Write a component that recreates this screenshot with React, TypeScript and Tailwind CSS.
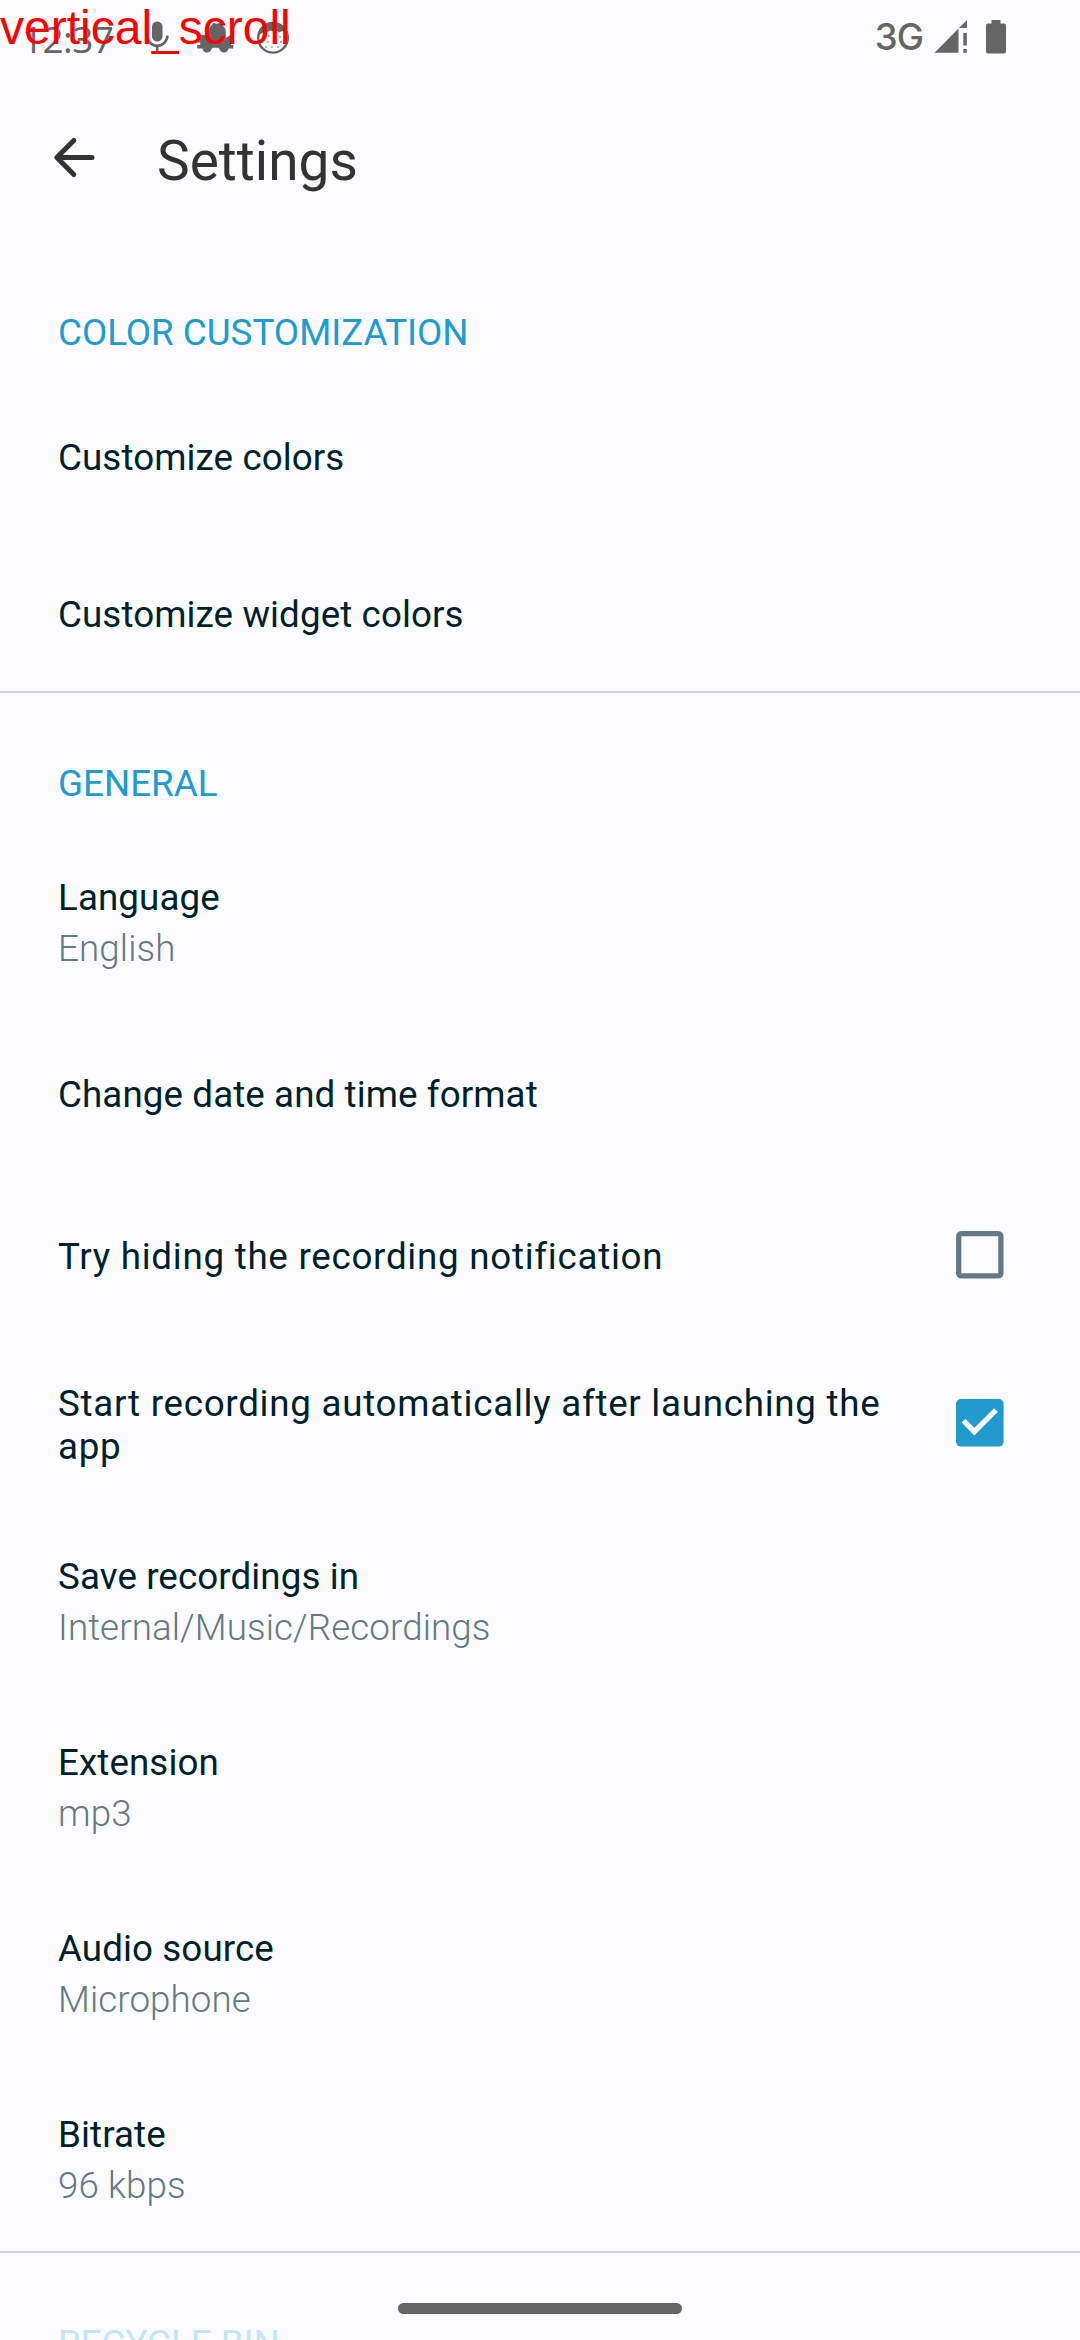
import type { ReactNode } from "react";

const FONT = "font-['Roboto',sans-serif]";

function StatusBar() {
  return (
    <div className="relative flex h-[76px] shrink-0 items-start text-[#656565]">
      <span className="ml-[22px] mt-[17px] w-[103px] font-['Open_Sans',sans-serif] text-[37px] leading-[43px] tracking-[-0.6px]">
        12:37
      </span>
      <svg className="mt-[16px] ml-[12px] h-[44px] w-[40px]" viewBox="137 16 40 44" fill="none">
        <rect x="152" y="21.500" width="10.500" height="20" rx="5.200" fill="currentColor" />
        <path d="M147 35.500a10.200 10.200 0 0 0 20.400 0M157.200 46v8" stroke="currentColor" strokeWidth="2.600" />
      </svg>
      <svg className="mt-[16px] ml-[15px] h-[44px] w-[48px]" viewBox="192 16 48 44" fill="currentColor">
        <path d="M208.800 40v-8q0-4.500 3-7 1.300-2 3-2 2.200 1.500 4.400 0 2.200.5 3.200 2.500 3.400 2 3.400 6.500v8z" />
        <path d="M200.500 35h4l4.500 3h17l4.500-3h3v7.500h-2.500v2.500h2.300v3.500h-4.500l-1.300 2.500q-3.500 3-7 0l-2-3.300h-6l-2 3.300q-3.500 3-7 0l-1.300-2.500h-5V45h3v-2.500h-2.500V40z" />
      </svg>
      <svg className="mt-[16px] ml-[13px] h-[44px] w-[40px]" viewBox="253 16 40 44" fill="none">
        <circle cx="273" cy="37.800" r="14.800" stroke="currentColor" strokeWidth="2.400" />
        <path
          d="M258.500 36q2-2.500 4.500-3.500l2.500-2 2 1.500 3-1.500 3 1 3-1 2.500 2 3.500-1.500 4.500 4q-1-12.500-14.500-12.500t-14 13.500z"
          fill="currentColor"
        />
        <g fill="currentColor">
          <circle cx="264" cy="38" r=".8" />
          <circle cx="269" cy="36" r=".8" />
          <circle cx="274" cy="38" r=".8" />
          <circle cx="280" cy="37" r=".8" />
          <circle cx="262.500" cy="42" r=".8" />
          <circle cx="268" cy="42" r=".8" />
          <circle cx="275" cy="43" r=".8" />
          <circle cx="281" cy="42" r=".8" />
          <circle cx="266" cy="47" r=".8" />
          <circle cx="272" cy="47" r=".8" />
          <circle cx="278" cy="47" r=".8" />
        </g>
      </svg>
      <span className="ml-auto mt-[15px] font-['Inter',sans-serif] text-[36.500px] font-medium leading-[45px] tracking-[-1px]">
        3G
      </span>
      <svg className="ml-[11px] mt-[16px] h-[44px] w-[34px]" viewBox="934 16 34 44" fill="currentColor">
        <path d="M934.500 52.700 958.500 28.500V52.700zM959 28l8-8v8z" />
        <path d="M963.300 33h3.500v12.500h-3.500zM963.300 49h3.500v3.700h-3.500z" />
      </svg>
      <svg className="ml-[17px] mr-[73px] mt-[16px] h-[44px] w-[22px]" viewBox="985 16 22 44" fill="currentColor">
        <path d="M991.500 20h9v3.500h3.500q2 0 2 2v26q0 2-2 2h-16q-2 0-2-2v-26q0-2 2-2h3.500z" />
      </svg>
      <span className="absolute left-0 top-0 font-['Liberation_Sans',sans-serif] text-[48px] leading-[55px] text-[#ff0000]">
        vertical_scroll
      </span>
    </div>
  );
}

function AppBar() {
  return (
    <header className="flex h-[166px] shrink-0 items-start text-[#333333]">
      <svg
        className="ml-[50px] mt-[58px] h-[48px] w-[48px]"
        viewBox="50 134 48 48"
        fill="none"
        stroke="currentColor"
        strokeWidth="5"
        strokeLinecap="round"
        strokeLinejoin="round"
      >
        <path d="M92 157.500H57M73.800 140.500 56.800 157.500 73.800 174.500" />
      </svg>
      <h1 className="ml-[59px] mt-[53px] text-[55px] leading-[64px]">Settings</h1>
    </header>
  );
}

function Section({ title, last, children }: { title: string; last?: boolean; children?: ReactNode }) {
  return (
    <section className="shrink-0">
      <h2
        className={`flex h-[137px] items-start pl-[58px] pt-[69px] text-[36.75px] leading-[43px] ${
          last ? "text-[#c4e6f4]" : "text-[#219bce]"
        }`}
      >
        {title}
      </h2>
      {children}
    </section>
  );
}

function Row({ label, value }: { label: string; value?: string }) {
  return (
    <div
      className={
        value
          ? "h-[186px] pl-[58px] pt-[46px] tracking-[0.09px]"
          : "h-[157px] pl-[58px] pt-[57px] tracking-[0.09px]"
      }
    >
      <p>{label}</p>
      {value && <p className="mt-[8px] font-light text-[#667883]">{value}</p>}
    </div>
  );
}

function CheckRow({ label, checked }: { label: string; checked?: boolean }) {
  return (
    <div className="flex h-[168px] items-center justify-between pl-[58px] pr-[76px]">
      <p className="mb-[0.6px] w-[850px] tracking-[0.72px]">{label}</p>
      <svg className="mb-[4px] h-[48px] w-[48px]" viewBox="0 0 48 48" fill="none">
        {checked ? (
          <>
            <rect width="47.600" height="47.600" rx="5" fill="#219bce" />
            <path d="M7.500 21.700 18.300 32.700 40 11" stroke="#fcfcff" strokeWidth="5.300" />
          </>
        ) : (
          <rect x="2.700" y="2.700" width="42.200" height="42.200" rx="2.500" stroke="#667883" strokeWidth="5.300" />
        )}
      </svg>
    </div>
  );
}

function Divider() {
  return <div className="-mt-[2px] h-[2px] bg-[#d0d1d3]" />;
}

export default function App() {
  return (
    <main
      className={`relative flex h-[2340px] w-[1080px] flex-col overflow-hidden bg-[#fcfcff] text-[36.75px] leading-[43px] text-[#001f2c] ${FONT}`}
    >
      <StatusBar />
      <AppBar />
      <Section title="COLOR CUSTOMIZATION">
        <Row label="Customize colors" />
        <Row label="Customize widget colors" />
        <Divider />
      </Section>
      <Section title="GENERAL">
        <Row label="Language" value="English" />
        <Row label="Change date and time format" />
        <CheckRow label="Try hiding the recording notification" />
        <CheckRow label="Start recording automatically after launching the app" checked />
        <Row label="Save recordings in" value="Internal/Music/Recordings" />
        <Row label="Extension" value="mp3" />
        <Row label="Audio source" value="Microphone" />
        <Row label="Bitrate" value="96 kbps" />
        <Divider />
      </Section>
      <Section title="RECYCLE BIN" last />
      <div className="absolute bottom-[26px] left-[398px] h-[11px] w-[284px] rounded-full bg-[#656565]" />
    </main>
  );
}
